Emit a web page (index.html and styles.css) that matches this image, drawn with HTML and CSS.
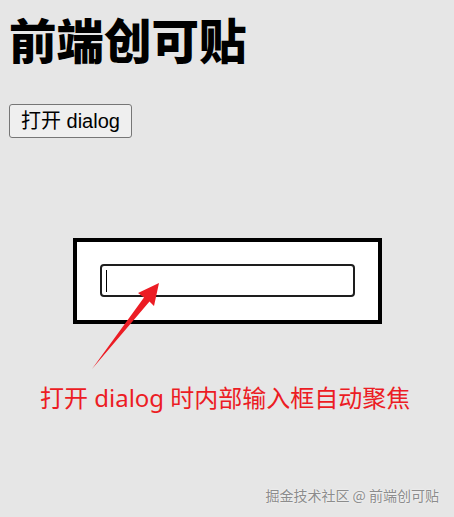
FILE: index.html
```html
<!DOCTYPE html>
<html lang="zh-CN">
<head>
<meta charset="utf-8">
<title>前端创可贴</title>
<link rel="stylesheet" href="styles.css">
</head>
<body>
  <h1 class="title">前端创可贴</h1>
  <button class="open-btn" type="button">打开 dialog</button>

  <div class="dialog">
    <div class="field"><span class="caret"></span></div>
  </div>

  <div class="annotation">
    <svg class="arrow" width="454" height="517" viewBox="0 0 454 517" aria-hidden="true">
      <polygon points="92,369 144,297.5 138,293 159,283 154,306 149.5,301.5" fill="#ec1c24"/>
    </svg>
    <p class="note">打开 dialog 时内部输入框自动聚焦</p>
  </div>

  <div class="watermark">掘金技术社区 @ 前端创可贴</div>
</body>
</html>
```

FILE: styles.css
```css
html, body {
  height: 100%;
}
body {
  margin: 0;
  padding: 0 9px;
  background: #e6e6e6;
  font-family: "Noto Sans", "Noto Sans CJK SC", sans-serif;
  position: relative;
  overflow: hidden;
}
.title {
  margin: 0;
  padding-top: 15px;
  font-family: "Noto Sans CJK SC", sans-serif;
  font-weight: 900;
  font-size: 47.5px;
  line-height: 47px;
  color: #000;
  letter-spacing: 0;
}
.open-btn {
  display: block;
  margin-top: 42px;
  height: 34px;
  padding: 0 11px;
  border: 1px solid #767676;
  border-radius: 3px;
  background: #efefef;
  font-family: "Liberation Sans", "Noto Sans CJK SC", sans-serif;
  font-size: 20px;
  line-height: 24px;
  color: #000;
}
.dialog {
  position: absolute;
  top: 238px;
  left: 0;
  right: 0;
  margin: 0 auto;
  width: 309px;
  box-sizing: border-box;
  border: 4px solid #000;
  background: #fff;
  padding: 22px 23px 23px;
}
.field {
  height: 33px;
  box-sizing: border-box;
  border: 2px solid #1e1e1e;
  border-radius: 4px;
  background: #fff;
  display: flex;
  align-items: center;
  padding-left: 4px;
}
.caret {
  width: 1px;
  height: 22px;
  background: #000;
}
.annotation {
  position: absolute;
  inset: 0;
  pointer-events: none;
}
.arrow {
  position: absolute;
  left: 0;
  top: 0;
}
.note {
  position: absolute;
  left: 40px;
  top: 382px;
  margin: 0;
  font-size: 24px;
  line-height: 32px;
  color: #ec1c24;
  white-space: nowrap;
}
.watermark {
  position: absolute;
  right: 15px;
  bottom: 13px;
  font-family: "Noto Sans CJK SC", sans-serif;
  font-size: 14px;
  line-height: 18px;
  color: #8c8c8c;
  text-shadow: 0 0 2px #fff;
  white-space: nowrap;
}
```
